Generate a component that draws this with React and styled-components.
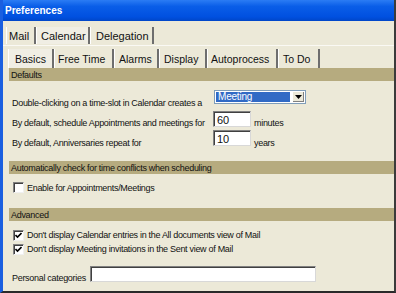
import React from "react";
import styled, { createGlobalStyle } from "styled-components";

const GlobalStyle = createGlobalStyle`
  html, body {
    margin: 0;
    padding: 0;
    background: #ece9d8;
  }
  * {
    box-sizing: border-box;
  }
`;

const Window = styled.div`
  width: 396px;
  height: 293px;
  display: flex;
  flex-direction: column;
  background: #ece9d8;
  border-left: 3px solid #1a5fe0;
  border-right: 2px solid #3b3b3b;
  border-bottom: 2px solid #2a2a2a;
  overflow: hidden;
  font-family: "Liberation Sans", Arial, sans-serif;
  font-size: 9px;
  letter-spacing: -0.3px;
  line-height: 12px;
  color: #111;
`;

const TitleBar = styled.div`
  height: 21px;
  flex-shrink: 0;
  margin-left: -3px;
  margin-right: -2px;
  padding-left: 5px;
  display: flex;
  align-items: center;
  background: linear-gradient(to bottom, #2b7cf4 0%, #0a5ee8 30%, #0050e0 80%, #0046c8 100%);
  color: #fff;
  font-weight: bold;
  font-size: 10px;
  letter-spacing: 0;
`;

const TabRow = styled.div`
  display: flex;
  flex-shrink: 0;
  height: ${(p) => p.height}px;
  margin-left: ${(p) => p.indent}px;
  margin-top: ${(p) => p.top}px;
`;

const Tab = styled.div`
  width: ${(p) => p.width}px;
  height: 100%;
  display: flex;
  align-items: center;
  padding-left: ${(p) => p.pad}px;
  padding-top: 1px;
  font-size: ${(p) => p.size}px;
  letter-spacing: 0;
  border-left: 1px solid #fff;
  border-right: 2px solid #6e6e6e;
  background: ${(p) => (p.active ? "#f0eee4" : "#ece9d8")};
  white-space: nowrap;
`;

const PanelLine = styled.div`
  height: 1px;
  flex-shrink: 0;
  margin-top: 1px;
  background: #faf9f4;
`;

const Panel = styled.div`
  flex: 1;
  margin-left: 6px;
  display: flex;
  flex-direction: column;
`;

const SectionHeader = styled.div`
  height: 13px;
  flex-shrink: 0;
  background: #b6ab7f;
  padding-left: 2px;
  display: flex;
  align-items: center;
  margin-top: ${(p) => p.top || 0}px;
  white-space: nowrap;
`;

const FieldRow = styled.div`
  display: flex;
  align-items: flex-end;
  flex-shrink: 0;
  height: ${(p) => p.height}px;
  padding-left: 3px;
  margin-top: ${(p) => p.top || 0}px;
`;

const Label = styled.div`
  width: ${(p) => p.width}px;
  flex-shrink: 0;
  white-space: nowrap;
  margin-bottom: ${(p) => p.drop}px;
`;

const Select = styled.div`
  width: 92px;
  height: 14px;
  border: 1px solid #7f9db9;
  background: #fff;
  display: flex;
  padding: 1px;
  margin-left: 1px;
`;

const SelectValue = styled.div`
  flex: 1;
  background: #316ac5;
  color: #fff;
  padding-left: 2px;
  display: flex;
  align-items: center;
  font-size: 10px;
  letter-spacing: -0.2px;
`;

const SelectButton = styled.div`
  width: 12px;
  display: flex;
  align-items: center;
  justify-content: center;
  background: #ece9d8;
  border-left: 1px solid #fff;
  box-shadow: inset -1px -1px 0 #808080;
  margin-left: 2px;
`;

const TextBox = styled.div`
  width: ${(p) => p.width}px;
  height: 16px;
  background: #fff;
  border: 1px solid #808080;
  border-right-color: #d8d8d8;
  border-bottom-color: #d8d8d8;
  box-shadow: inset 1px 1px 0 #404040;
  padding: 1px 0 0 3px;
  display: flex;
  align-items: center;
  margin-right: 3px;
  font-size: 11px;
  letter-spacing: 0;
`;

const Unit = styled.span`
  margin-bottom: ${(p) => p.drop}px;
`;

const Check = styled.div`
  width: 11px;
  height: 11px;
  flex-shrink: 0;
  background: #fff;
  border: 1px solid #808080;
  border-right-color: #f0f0f0;
  border-bottom-color: #f0f0f0;
  box-shadow: inset 1px 1px 0 #404040;
  margin-right: 3px;
  display: flex;
  align-items: center;
  justify-content: center;
`;

const CheckRow = styled.div`
  display: flex;
  align-items: center;
  flex-shrink: 0;
  height: ${(p) => p.height}px;
  padding-left: 4px;
  margin-top: ${(p) => p.top || 0}px;
  white-space: nowrap;
`;

const Tick = () => (
  <svg width="7" height="7" viewBox="0 0 7 7">
    <path d="M0.5 3 L2.5 5 L6.5 1" stroke="#000" strokeWidth="1.6" fill="none" />
  </svg>
);

const Arrow = () => (
  <svg width="7" height="4" viewBox="0 0 7 4">
    <path d="M0 0 H7 L3.5 4 Z" fill="#000" />
  </svg>
);

const topTabs = [
  { label: "Mail", width: 30, pad: 2 },
  { label: "Calendar", width: 54, pad: 4, active: true },
  { label: "Delegation", width: 64, pad: 5 },
];

const subTabs = [
  { label: "Basics", width: 46, pad: 6, active: true },
  { label: "Free Time", width: 60, pad: 3 },
  { label: "Alarms", width: 45, pad: 4 },
  { label: "Display", width: 48, pad: 4 },
  { label: "Autoprocess", width: 71, pad: 3 },
  { label: "To Do", width: 42, pad: 4 },
];

export default function App() {
  return (
    <>
      <GlobalStyle />
      <Window>
        <TitleBar>Preferences</TitleBar>
        <TabRow height={17} indent={3} top={6}>
          {topTabs.map((t) => (
            <Tab key={t.label} width={t.width} pad={t.pad} size={11} active={t.active}>
              {t.label}
            </Tab>
          ))}
        </TabRow>
        <PanelLine />
        <TabRow height={19} indent={5} top={3}>
          {subTabs.map((t) => (
            <Tab key={t.label} width={t.width} pad={t.pad} size={10.5} active={t.active}>
              {t.label}
            </Tab>
          ))}
        </TabRow>
        <Panel>
          <SectionHeader>Defaults</SectionHeader>
          <FieldRow height={23}>
            <Label width={201} drop={-5}>
              Double-clicking on a time-slot in Calendar creates a
            </Label>
            <Select>
              <SelectValue>Meeting</SelectValue>
              <SelectButton>
                <Arrow />
              </SelectButton>
            </Select>
          </FieldRow>
          <FieldRow height={23}>
            <Label width={201} drop={-2}>
              By default, schedule Appointments and meetings for
            </Label>
            <TextBox width={38}>60</TextBox>
            <Unit drop={-2}>minutes</Unit>
          </FieldRow>
          <FieldRow height={19}>
            <Label width={201} drop={-3}>
              By default, Anniversaries repeat for
            </Label>
            <TextBox width={38}>10</TextBox>
            <Unit drop={-3}>years</Unit>
          </FieldRow>
          <SectionHeader top={15}>Automatically check for time conflicts when scheduling</SectionHeader>
          <CheckRow height={11} top={8}>
            <Check />
            Enable for Appointments/Meetings
          </CheckRow>
          <SectionHeader top={15}>Advanced</SectionHeader>
          <CheckRow height={12} top={8}>
            <Check>
              <Tick />
            </Check>
            Don't display Calendar entries in the All documents view of Mail
          </CheckRow>
          <CheckRow height={12} top={2}>
            <Check>
              <Tick />
            </Check>
            Don't display Meeting invitations in the Sent view of Mail
          </CheckRow>
          <FieldRow height={16} top={11}>
            <Label width={78} drop={-2}>
              Personal categories
            </Label>
            <TextBox width={226} />
          </FieldRow>
        </Panel>
      </Window>
    </>
  );
}
